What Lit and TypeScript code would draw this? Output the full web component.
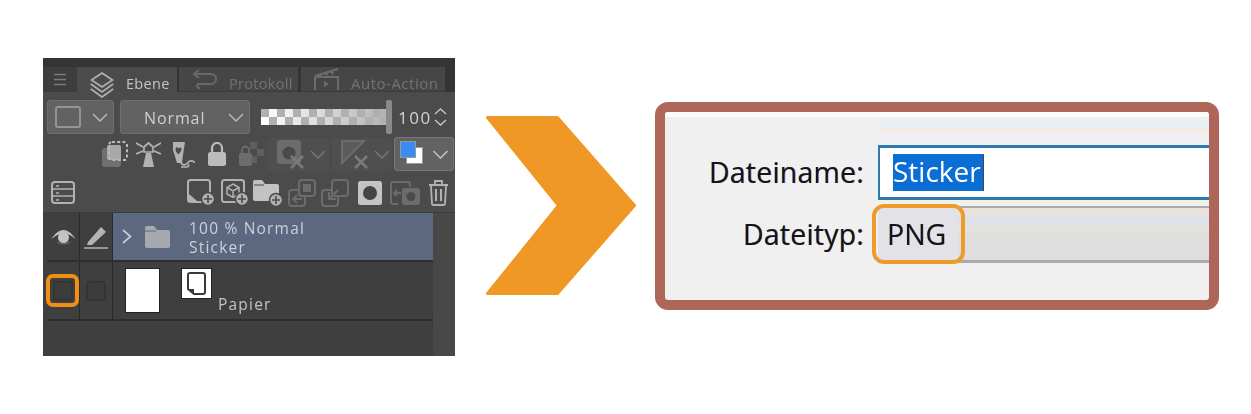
import { LitElement, html, css, svg } from "lit";
import { customElement } from "lit/decorators.js";

const L = "#b2b2b2";
const D = "#6c6c6c";

const chev = (w = 16, c = L) => html`<svg width=${w} height="9" viewBox="0 0 16 9" fill="none"><path d="M1 1l7 7 7-7" stroke=${c} stroke-width="1.6"/></svg>`;

const plus = (cx: number, cy: number, c = L) => svg`
  <circle cx=${cx} cy=${cy} r="6.5" fill=${c} stroke="#4b4b4b" stroke-width="1.5"/>
  <path d="M${cx - 4} ${cy}h8M${cx} ${cy - 4}v8" stroke="#4b4b4b" stroke-width="1.6"/>`;

const icons = {
  selCopy: html`<svg width="26" height="26" viewBox="0 0 26 26" fill="none"><rect x="0" y="7" width="19" height="19" rx="3" fill="#707070"/><rect x="5" y="4" width="14" height="15" rx="2" fill="#a8a8a8"/><rect x="7" y="1" width="18" height="18" rx="3" stroke="#bcbcbc" stroke-width="2" stroke-dasharray="3 2.2"/></svg>`,
  tower: html`<svg width="25" height="26" viewBox="0 0 25 26" fill="none"><path d="M10 12h5l3 14H7z" fill=${L}/><path d="M8 11V6l4.500-4L17 6v5z" stroke=${L} stroke-width="1.700"/><path d="M0 2l7 4M0 13l7-3M25 2l-7 4M25 13l-7-3" stroke=${L} stroke-width="1.800"/></svg>`,
  brush: html`<svg width="23" height="27" viewBox="0 0 23 27" fill="none"><path d="M1 1h12l-2 13-1 8H5L1 9z" fill=${L}/><path d="M3.500 8c.5-2.500 2-2 3-.5 1-1.500 3-1.500 3 .5s-2 4-3 5.500C5 12 3 10 3.500 8z" fill="#4b4b4b"/><path d="M9 22c2 3 5 2 7-.5s4-2 7 0M9 26h6c2 0 2-2 1-3" stroke=${L} stroke-width="1.700"/></svg>`,
  lock: html`<svg width="18" height="24" viewBox="0 0 18 24" fill="none"><rect y="10" width="18" height="14" rx="2.500" fill="#bcbcbc"/><path d="M4 11V6a5 5 0 0110 0v5" stroke="#bcbcbc" stroke-width="2.200"/></svg>`,
  lockChk: html`<svg width="25" height="24" viewBox="0 0 25 24" fill="none"><path d="M11 0h7v7h-7zM18 7h7v7h-7zM11 14h7v7h-7z" fill="#5f5f5f"/><rect y="11" width="13" height="13" rx="2" fill=${D}/><path d="M3 12V8a3.500 3.500 0 017 0v4" stroke=${D} stroke-width="1.800"/></svg>`,
  clipA: html`<svg width="28" height="29" viewBox="0 0 28 29" fill="none"><rect width="24" height="24" rx="3" fill=${D}/><circle cx="12" cy="13" r="6.500" fill="#4a4a4a"/><path d="M14 16l12 12M26 16L14 28" stroke="#7a7a7a" stroke-width="2.600"/></svg>`,
  clipB: html`<svg width="28" height="29" viewBox="0 0 28 29" fill="none"><path d="M1 1h22L1 23z" stroke=${D} stroke-width="2" fill="#5c5c5c"/><path d="M14 16l12 12M26 16L14 28" stroke="#7a7a7a" stroke-width="2.600"/></svg>`,
  list: html`<svg width="24" height="23" viewBox="0 0 24 23" fill="none"><rect x="1" y="1" width="22" height="21" rx="3" stroke=${L} stroke-width="2"/><path d="M1 8h22M1 15h22" stroke=${L} stroke-width="1.500"/><path d="M5 5h3M5 12h3M5 19h3" stroke=${L} stroke-width="1.500"/></svg>`,
  newLayer: html`<svg width="28" height="27" viewBox="0 0 28 27" fill="none"><rect x="1" y="1" width="22" height="22" rx="2.500" stroke=${L} stroke-width="2"/><path d="M2 15l8 7H2z" fill=${L}/>${plus(21, 20)}</svg>`,
  new3d: html`<svg width="28" height="27" viewBox="0 0 28 27" fill="none"><rect x="1" y="1" width="22" height="22" rx="2.500" stroke=${L} stroke-width="2"/><path d="M12 5l6 3.500v6.500l-6 3.500L6 15V8.500zM6 8.500l6 3.500 6-3.500M12 12v6.500" stroke=${L} stroke-width="1.500"/>${plus(21, 20)}</svg>`,
  newFolder: html`<svg width="30" height="28" viewBox="0 0 30 28" fill="none"><path d="M0 3a2 2 0 012-2h7l3 4h12a2 2 0 012 2v13a2 2 0 01-2 2H2a2 2 0 01-2-2z" fill="#c2c2c2"/><path d="M1 6h10" stroke="#4b4b4b" stroke-width="1"/>${plus(23, 21)}</svg>`,
  copyUp: html`<svg width="28" height="28" viewBox="0 0 28 28" fill="none"><rect x="1" y="11" width="16" height="16" rx="3" stroke=${D} stroke-width="2"/><rect x="11" y="1" width="16" height="16" rx="3" stroke=${D} stroke-width="2" fill="#4b4b4b"/><rect x="15" y="5" width="8" height="8" fill=${D}/><path d="M14 20H6m3-4l-4 4 4 4" stroke=${D} stroke-width="2"/></svg>`,
  copyDown: html`<svg width="28" height="28" viewBox="0 0 28 28" fill="none"><rect x="1" y="11" width="16" height="16" rx="3" stroke=${D} stroke-width="2"/><rect x="11" y="1" width="16" height="16" rx="3" stroke=${D} stroke-width="2" fill="#4b4b4b"/><path d="M17 11l-9 9m0-7v7h7" stroke=${D} stroke-width="2.200"/></svg>`,
  mask: html`<svg width="24" height="24" viewBox="0 0 24 24"><rect width="24" height="24" rx="2.500" fill="#c4c4c4"/><circle cx="12" cy="12" r="7" fill="#454545"/></svg>`,
  camera: html`<svg width="30" height="24" viewBox="0 0 30 24" fill="none"><path d="M8 23H3a2 2 0 01-2-2V3a2 2 0 012-2h15a2 2 0 012 2v3" stroke=${D} stroke-width="2"/><rect x="12" y="7" width="18" height="17" rx="2.500" fill=${D}/><circle cx="21" cy="15.500" r="4.500" fill="#4b4b4b"/><path d="M11 12H4m3-3l-3 3 3 3" stroke=${D} stroke-width="2"/></svg>`,
  trash: html`<svg width="21" height="26" viewBox="0 0 21 26" fill="none"><path d="M1 5h19M7 4V1h7v3" stroke=${L} stroke-width="1.800"/><path d="M3 6l1 18a1.500 1.500 0 001.500 1h10a1.500 1.500 0 001.500-1l1-18" stroke=${L} stroke-width="1.800"/><path d="M8 9v12M13 9v12" stroke=${L} stroke-width="2"/></svg>`,
};

@customElement("app-root")
export class AppRoot extends LitElement {
  static styles = css`
    :host { display: block; width: 1251px; height: 414px; background: #fff; overflow: hidden; }
    .page { display: flex; align-items: flex-start; padding: 58px 0 0 43px; box-sizing: border-box; height: 414px; }

    .panel { width: 412px; height: 298px; background: #4b4b4b; display: flex; flex-direction: column; font-family: "Open Sans", sans-serif; filter: blur(0.45px); }
    .tabs { height: 34px; box-sizing: border-box; padding-top: 9px; background: #343434; display: flex; flex: none; }
    .menu { width: 34px; background: #3d3d3d; display: flex; align-items: center; justify-content: center; }
    .tab { display: flex; align-items: center; box-sizing: border-box; background: #464646; color: #737373; font-size: 14.500px; letter-spacing: .3px; border-bottom: 1px solid #3a3a3a; }
    .tab span { margin-top: 8px; }
    .tab.active { width: 100px; background: #4b4b4b; color: #c4c4c4; border-bottom: 0; padding-left: 13px; gap: 12px; margin-right: 2px; }
    .tab.active svg { margin-top: 11px; }
    .tab.p { width: 119px; padding-left: 12px; gap: 11px; margin-right: 3px; }
    .tab.a { width: 144px; padding-left: 13px; gap: 12px; font-size: 15px; letter-spacing: .5px; }

    .row1 { display: flex; align-items: center; height: 34px; margin-top: 8px; padding-left: 4px; flex: none; }
    .combo { box-sizing: border-box; height: 34px; display: flex; align-items: center; background: #626262; border: 1px solid #6f6f6f; border-radius: 3px; }
    .shape { width: 67px; padding: 0 5px 0 7px; justify-content: space-between; margin-right: 6px; }
    .swatch { width: 26px; height: 22px; border: 2px solid #959595; border-radius: 3px; box-sizing: border-box; }
    .blend { width: 130px; padding: 0 5px 0 23px; justify-content: space-between; margin-right: 11px; color: #d0d0d0; font-size: 16px; letter-spacing: 0.900px; }
    .blend span { margin-top: 2px; }
    .slider { width: 125px; height: 16px; background-color: #c6c6c6;
      background-image: conic-gradient(#fff 25%, #b0b0b0 0 50%, #fff 0 75%, #b0b0b0 0);
      background-size: 16px 16px; flex: none; }
    .slider-fade { display: block; width: 100%; height: 100%; background: linear-gradient(to right, rgba(190,190,190,0), rgba(176,176,176,.95)); }
    .handle { width: 6px; height: 34px; background: #8a8a8a; border-radius: 2px; margin-right: 6px; flex: none; }
    .num { color: #d2d2d2; font-size: 17px; letter-spacing: 1.500px; width: 36px; flex: none; }
    .spin { display: flex; flex-direction: column; gap: 4px; }

    .row2 { display: grid; grid-template-columns: 34px 36px 36px 31px 29px 64px 62px 60px; align-items: center; height: 34px; margin-top: 3px; padding-left: 59px; flex: none; }
    .box { box-sizing: border-box; width: 61px; height: 33px; background: #4f4f4f; border-radius: 3px; display: flex; align-items: center; gap: 5px; padding-left: 9px; }
    .box.b2 { width: 60px; }
    .colors { box-sizing: border-box; width: 60px; height: 34px; background: #626262; border: 1px solid #777; border-radius: 3px; display: flex; align-items: center; justify-content: space-between; padding: 0 4px 0 5px; }
    .fgbg { display: grid; width: 23px; height: 23px; margin-top: -3px; }
    .fg, .bg { grid-area: 1 / 1; box-sizing: border-box; width: 17px; height: 17px; border: 1px solid #9a9a9a; }
    .bg { background: #fff; justify-self: end; align-self: end; }
    .fg { background: #3a8bf3; width: 16px; height: 17px; z-index: 1; }

    .row3 { display: grid; grid-template-columns: 136px 34px 32px 35px 33px 37px 32px 38px 22px; align-items: center; height: 29px; margin-top: 7px; padding-left: 8px; flex: none; }

    .layers { flex: 1; margin-top: 5px; border-top: 1px solid #3c3c3c; display: flex; background: #484848; }
    .list { width: 390px; background: #3f3f3f; box-sizing: border-box; padding-left: 4px; display: flex; flex-direction: column; }
    .layer { display: flex; box-sizing: border-box; border-bottom: 2px solid #2e2e2e; flex: none; color: #c4c4c4; }
    .l1 { height: 49px; }
    .l2 { height: 59px; }
    .cell { width: 33px; box-sizing: border-box; border-right: 1px solid #2a2a2a; display: flex; align-items: center; justify-content: center; flex: none; }
    .cell.first { position: relative; }
    .check { box-sizing: border-box; width: 20px; height: 20px; border: 2px solid #343434; border-radius: 3px; background: #3c3c3c; }
    .mark { position: absolute; left: -1px; top: 12px; width: 33px; height: 33px; box-sizing: border-box; border: 4px solid #f08f12; border-radius: 7px; }
    .sel { flex: 1; background: #5c6880; display: flex; align-items: center; padding-left: 9px; }
    .sel .folder { margin-left: 13px; }
    .names { margin: 3px 0 0 19px; font-size: 15.500px; line-height: 19px; letter-spacing: 1.200px; color: #ccd0d8; }
    .paper { flex: 1; display: flex; align-items: flex-start; padding: 6px 0 0 12px; }
    .thumb { width: 35px; height: 45px; background: #fff; border: 1px solid #222; box-sizing: border-box; }
    .maskthumb { width: 31px; height: 31px; margin-left: 21px; background: #fff; border: 1px solid #222; box-sizing: border-box; display: flex; align-items: center; justify-content: center; }
    .pname { margin: 26px 0 0 6px; font-size: 15.500px; line-height: 20px; letter-spacing: 1.200px; }

    .arrow { margin: 58px 0 0 31px; flex: none; display: block; }

    .dialog { box-sizing: border-box; width: 564px; height: 208px; margin: 44px 0 0 19px; border: 10px solid #ae6659; border-radius: 13px; background: #f0f0f0; flex: none; overflow: hidden; filter: blur(0.35px); }
    .dlg-top { height: 5px; background: #fbfcf8; }
    .form { display: grid; grid-template-columns: 199px 1fr; grid-template-rows: 28px 55px 6px 57px; font-family: "Open Sans", sans-serif; font-size: 28.500px; color: #14141c; }
    .hz1 { grid-column: 2; grid-row: 1; margin-left: 14px; background: linear-gradient(to bottom, #edf0f3 0 4px, #e5f1f6 4px 10px, #f5ece6 10px 16px, #f0eff3 16px 28px); }
    .lab { text-align: right; align-self: center; margin-top: -1px; letter-spacing: .2px; text-shadow: -0.6px 0 rgba(230,140,0,.55), 0.6px 0 rgba(0,70,220,.55); }
    .l-a { grid-column: 1; grid-row: 2; }
    .l-b { grid-column: 1; grid-row: 4; }
    .input { grid-column: 2; grid-row: 2; margin-left: 14px; box-sizing: border-box; background: #fff; border: solid #2f78b0; border-width: 3px 0 3px 2px; display: flex; align-items: center; padding-left: 13px; }
    .selected { background: #0a6ed4; color: #fff; height: 37px; line-height: 35px; font-size: 28px; padding-right: 2px; box-sizing: border-box; border-right: 1px solid #445; white-space: nowrap; }
    .hz2 { grid-column: 2; grid-row: 3; background: #f3f0ea; }
    .drop { grid-column: 2; grid-row: 4; margin-left: 14px; box-sizing: border-box; border-top: 2px solid #a9a9b0; border-bottom: 3px solid #aaa; position: relative; display: flex; align-items: center; background: linear-gradient(to bottom, #e7e2dc 0 8px, #dce2e8 8px 18px, #e6e2dc 18px 24px, #dedede 24px); }
    .png { width: 80px; height: 100%; box-sizing: border-box; padding-left: 9px; background: #e3e3e7; display: flex; align-items: center; text-shadow: -0.5px 0 rgba(230,140,0,.4), 0.5px 0 rgba(0,70,220,.4); }
    .ring { position: absolute; left: -6.500px; top: -4.500px; width: 93px; height: 60px; box-sizing: border-box; border: 4.500px solid #ef9a2c; border-radius: 12px; }
  `;

  render() {
    return html`
      <div class="page">
        <section class="panel">
          <div class="tabs">
            <div class="menu"><svg width="14" height="13" viewBox="0 0 14 13" fill="none"><path d="M1 1.500h12M1 6.500h12M1 11.500h12" stroke="#7c7c7c" stroke-width="1.500"/></svg></div>
            <div class="tab active">
              <svg width="24" height="26" viewBox="0 0 24 26" fill="none" stroke="#b0b0b0" stroke-width="1.800"><path d="M12 1l10.500 7L12 15 1.500 8z"/><path d="M2 12l-.5.500L12 20l10.500-7.500L22 12"/><path d="M2 17l-.5.500L12 25l10.500-7.500L22 17"/></svg>
              <span>Ebene</span>
            </div>
            <div class="tab p">
              <svg width="27" height="20" viewBox="0 0 27 20" fill="none" stroke="#686868" stroke-width="2"><path d="M8 1L3 5l5 4M3 5h17a5 5 0 010 10H7a3 3 0 000 4h2"/></svg>
              <span>Protokoll</span>
            </div>
            <div class="tab a">
              <svg width="25" height="22" viewBox="0 0 25 22" fill="none" stroke="#6c6c6c" stroke-width="2"><path d="M1 8L24 1M1 9h23v13M1 9v13" /><path d="M5 6l2 3M11 4l2 3M17 3l2 3" stroke-width="3"/><path d="M10 13v6l5-3z" fill="#6c6c6c" stroke="none"/></svg>
              <span>Auto-Action</span>
            </div>
          </div>

          <div class="row1">
            <div class="combo shape"><span class="swatch"></span>${chev()}</div>
            <div class="combo blend"><span>Normal</span>${chev()}</div>
            <div class="slider"><span class="slider-fade"></span></div>
            <div class="handle"></div>
            <span class="num">100</span>
            <div class="spin">
              <svg width="13" height="7" viewBox="0 0 13 7" fill="none"><path d="M1 6l5.500-5L12 6" stroke="#c8c8c8" stroke-width="1.300"/></svg>
              <svg width="13" height="7" viewBox="0 0 13 7" fill="none"><path d="M1 1l5.500 5L12 1" stroke="#c8c8c8" stroke-width="1.300"/></svg>
            </div>
          </div>

          <div class="row2">
            ${icons.selCopy}${icons.tower}${icons.brush}${icons.lock}${icons.lockChk}
            <div class="box">${icons.clipA}${chev(16, "#757575")}</div>
            <div class="box b2">${icons.clipB}${chev(16, "#757575")}</div>
            <div class="colors">
              <div class="fgbg"><span class="bg"></span><span class="fg"></span></div>
              ${chev(17, "#c0c0c0")}
            </div>
          </div>

          <div class="row3">
            ${icons.list}${icons.newLayer}${icons.new3d}${icons.newFolder}${icons.copyUp}${icons.copyDown}${icons.mask}${icons.camera}${icons.trash}
          </div>

          <div class="layers">
            <div class="list">
              <div class="layer l1">
                <div class="cell">
                  <svg width="25" height="16" viewBox="0 0 25 16"><path d="M0.500 10C5 3 9 1 12.500 1S20 3 24.500 10C20 6 16 4.500 12.500 4.500S5 6 0.500 10z" fill="#bdbdbd"/><circle cx="12.500" cy="8.500" r="5.500" fill="#c4c4c4"/><path d="M6 13c4 2.500 9 2.500 13 0" stroke="#777" fill="none"/></svg>
                </div>
                <div class="cell">
                  <svg width="24" height="24" viewBox="0 0 24 24" fill="none"><path d="M4 17L17 2l5 5L8 20H3z" fill="#b4b4b4"/><path d="M0 23h24" stroke="#b4b4b4" stroke-width="1.500"/></svg>
                </div>
                <div class="sel">
                  <svg width="10" height="15" viewBox="0 0 10 15" fill="none"><path d="M1 1l7.500 6.500L1 14" stroke="#c8ccd4" stroke-width="1.700"/></svg>
                  <svg class="folder" width="25" height="22" viewBox="0 0 25 22"><path d="M0 2a2 2 0 012-2h7l3 4h11a2 2 0 012 2v14a2 2 0 01-2 2H2a2 2 0 01-2-2z" fill="#a6a9ae"/><path d="M0 5h11" stroke="#5c6880" stroke-width="1"/></svg>
                  <div class="names"><div>100 % Normal</div><div>Sticker</div></div>
                </div>
              </div>
              <div class="layer l2">
                <div class="cell first"><span class="check"></span><span class="mark"></span></div>
                <div class="cell"><span class="check"></span></div>
                <div class="paper">
                  <div class="thumb"></div>
                  <div class="maskthumb">
                    <svg width="19" height="23" viewBox="0 0 19 23" fill="none"><path d="M5 1h11a2 2 0 012 2v17a2 2 0 01-2 2H7L1 17V3a2 2 0 012-2z" stroke="#3a3a3a" stroke-width="2"/><path d="M1 17h6v5z" fill="#3a3a3a"/></svg>
                  </div>
                  <div class="pname">Papier</div>
                </div>
              </div>
            </div>
          </div>
        </section>

        <svg class="arrow" width="150" height="179" viewBox="0 0 150 179">
          <path d="M1.500 1.500H71.500L148.500 89.500L71.500 177.500H1.500L72.500 89.500z" fill="#ef9826" stroke="#ef9826" stroke-width="3" stroke-linejoin="round"/>
        </svg>

        <section class="dialog">
          <div class="dlg-top"></div>
          <div class="form">
            <div class="hz1"></div>
            <div class="lab l-a">Dateiname:</div>
            <div class="input"><span class="selected">Sticker</span></div>
            <div class="hz2"></div>
            <div class="lab l-b">Dateityp:</div>
            <div class="drop"><span class="png">PNG</span><span class="ring"></span></div>
          </div>
        </section>
      </div>
    `;
  }
}
